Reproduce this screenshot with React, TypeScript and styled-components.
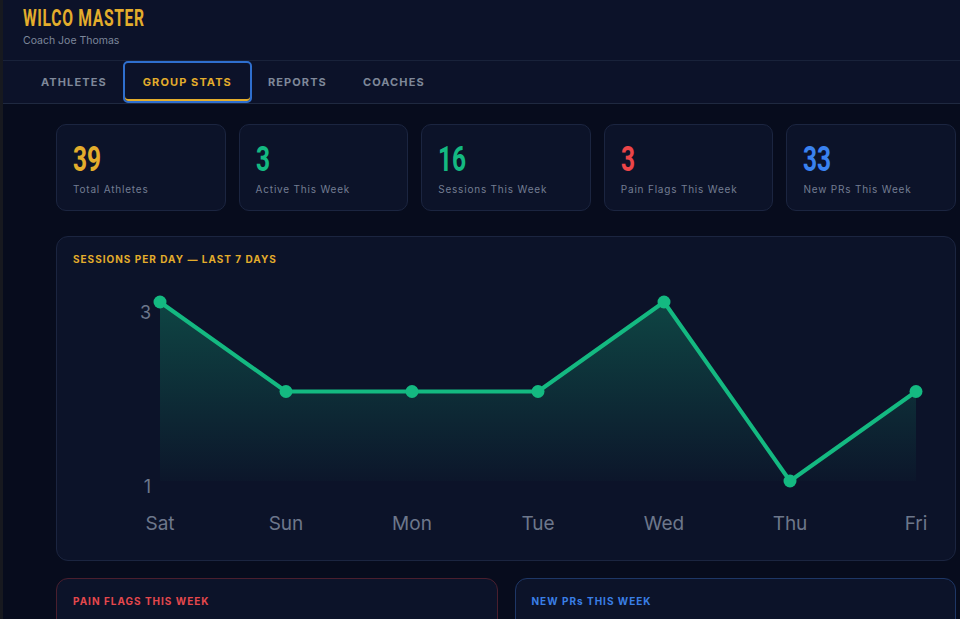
import React from 'react';
import styled, { createGlobalStyle } from 'styled-components';

const GlobalStyle = createGlobalStyle`
  html, body {
    margin: 0;
    padding: 0;
    background: #070c1d;
    overflow: hidden;
  }
  * {
    box-sizing: border-box;
  }
`;

const condensed = `"Roboto", "Liberation Sans", sans-serif`;
const sans = `"Inter", "Noto Sans", sans-serif`;

const StyledPage = styled.div`
  width: 960px;
  height: 619px;
  overflow: hidden;
  border-left: 3px solid #17191f;
  background: #070c1d;
  font-family: ${sans};

  header {
    background: #0c1229;
    height: 61px;
    padding: 7px 0 0 20px;
    border-bottom: 1px solid #19223a;

    h1 {
      margin: 0;
      display: inline-block;
      font-family: ${condensed};
      font-weight: 700;
      font-size: 23px;
      letter-spacing: 1px;
      color: #e3ad2c;
      line-height: 24px;
      transform: scaleX(0.68);
      transform-origin: left center;
    }

    p {
      margin: 3px 0 0;
      font-size: 10.5px;
      color: #7d879b;
    }
  }
`;

const TabBar = styled.nav`
  display: flex;
  height: 43px;
  padding: 2px 0 2px 20px;
  background: #0c1229;
  border-bottom: 1px solid #1f2940;
`;

const Tab = styled.div<{ $active?: boolean }>`
  display: flex;
  align-items: center;
  padding: 0 18px;
  font-size: 11px;
  font-weight: 700;
  letter-spacing: 1.1px;
  color: ${(p) => (p.$active ? '#e3ad2c' : '#7f8899')};
  border-radius: 3px;
  outline: ${(p) => (p.$active ? '2px solid #2f6fce' : 'none')};
  box-shadow: ${(p) => (p.$active ? 'inset 0 -2px 0 #e3ad2c' : 'none')};
`;

const Main = styled.main`
  padding: 20px 4px 0 53px;
  display: flex;
  flex-direction: column;
  gap: 25px;
`;

const StatRow = styled.div`
  display: grid;
  grid-template-columns: repeat(5, 1fr);
  gap: 13px;
`;

const Card = styled.div<{ $tint?: string }>`
  background: #0c1329;
  border: 1px solid ${(p) => p.$tint || '#1b2540'};
  border-radius: 10px;
`;

const StatCard = styled(Card)`
  height: 87px;
  padding: 20px 16px 0;
`;

const StatValue = styled.div<{ $color: string }>`
  display: inline-block;
  font-family: ${condensed};
  font-weight: 700;
  font-size: 35px;
  line-height: 30px;
  color: ${(p) => p.$color};
  transform: scaleX(0.7);
  transform-origin: left center;
`;

const StatLabel = styled.div`
  margin-top: 8px;
  font-size: 10px;
  letter-spacing: 0.8px;
  color: #737d92;
`;

const CardTitle = styled.h3<{ $color: string }>`
  margin: 0;
  font-size: 10px;
  font-weight: 700;
  letter-spacing: 1px;
  color: ${(p) => p.$color};
`;

const ChartCard = styled(Card)`
  height: 325px;
  border-radius: 12px;
  padding-top: 16px;

  h3 {
    padding-left: 16px;
  }

  svg {
    display: block;
    margin-top: 7px;
  }
`;

const BottomRow = styled.div`
  display: grid;
  grid-template-columns: 1fr 1fr;
  gap: 17px;
  margin-top: -8px;
`;

const ListCard = styled(Card)`
  height: 120px;
  border-radius: 12px;
  padding: 16px 16px;
`;

const stats = [
  { value: '39', label: 'Total Athletes', color: '#e3ad2c' },
  { value: '3', label: 'Active This Week', color: '#14b981' },
  { value: '16', label: 'Sessions This Week', color: '#14b981' },
  { value: '3', label: 'Pain Flags This Week', color: '#ec4548' },
  { value: '33', label: 'New PRs This Week', color: '#3a82f0' },
];

const days = [
  { d: 'Sat', v: 3 },
  { d: 'Sun', v: 2 },
  { d: 'Mon', v: 2 },
  { d: 'Tue', v: 2 },
  { d: 'Wed', v: 3 },
  { d: 'Thu', v: 1 },
  { d: 'Fri', v: 2 },
];

const SessionsChart: React.FC = () => {
  const x0 = 103;
  const step = 126;
  const base = 209;
  const yOf = (v: number) => base - (v - 1) * 89.5;
  const pts = days.map((p, i) => [x0 + i * step, yOf(p.v)]);
  const line = pts.map((p) => p.join(',')).join(' ');
  const area = `M${x0},${base} L${line.replace(/ /g, ' L')} L${pts[pts.length - 1][0]},${base} Z`;
  return (
    <svg width="898" height="282" viewBox="0 0 898 282">
      <defs>
        <linearGradient id="fill" x1="0" y1="0" x2="0" y2="1">
          <stop offset="0%" stopColor="#14b981" stopOpacity="0.3" />
          <stop offset="100%" stopColor="#14b981" stopOpacity="0.02" />
        </linearGradient>
      </defs>
      <path d={area} fill="url(#fill)" />
      <polyline points={line} fill="none" stroke="#14b981" strokeWidth="4" strokeLinejoin="round" />
      {pts.map(([x, y], i) => (
        <circle key={i} cx={x} cy={y} r="6.5" fill="#14b981" />
      ))}
      <g fontFamily="Inter, 'Noto Sans', sans-serif" fill="#6d778b">
        <text x="94" y="47" fontSize="18" textAnchor="end">3</text>
        <text x="94" y="221" fontSize="18" textAnchor="end">1</text>
        {days.map((p, i) => (
          <text key={p.d} x={x0 + i * step} y="258" fontSize="19" textAnchor="middle">
            {p.d}
          </text>
        ))}
      </g>
    </svg>
  );
};

const App: React.FC = () => {
  return (
    <StyledPage>
      <GlobalStyle />
      <header>
        <h1>WILCO MASTER</h1>
        <p>Coach Joe Thomas</p>
      </header>
      <TabBar>
        <Tab>ATHLETES</Tab>
        <Tab $active>GROUP STATS</Tab>
        <Tab>REPORTS</Tab>
        <Tab>COACHES</Tab>
      </TabBar>
      <Main>
        <StatRow>
          {stats.map((s) => (
            <StatCard key={s.label}>
              <StatValue $color={s.color}>{s.value}</StatValue>
              <StatLabel>{s.label}</StatLabel>
            </StatCard>
          ))}
        </StatRow>
        <ChartCard>
          <CardTitle $color="#e3ad2c">SESSIONS PER DAY — LAST 7 DAYS</CardTitle>
          <SessionsChart />
        </ChartCard>
        <BottomRow>
          <ListCard $tint="#4a1f2e">
            <CardTitle $color="#e5484d">PAIN FLAGS THIS WEEK</CardTitle>
          </ListCard>
          <ListCard $tint="#1e3766">
            <CardTitle $color="#3a7fe6">NEW PRs THIS WEEK</CardTitle>
          </ListCard>
        </BottomRow>
      </Main>
    </StyledPage>
  );
};

export default App;
